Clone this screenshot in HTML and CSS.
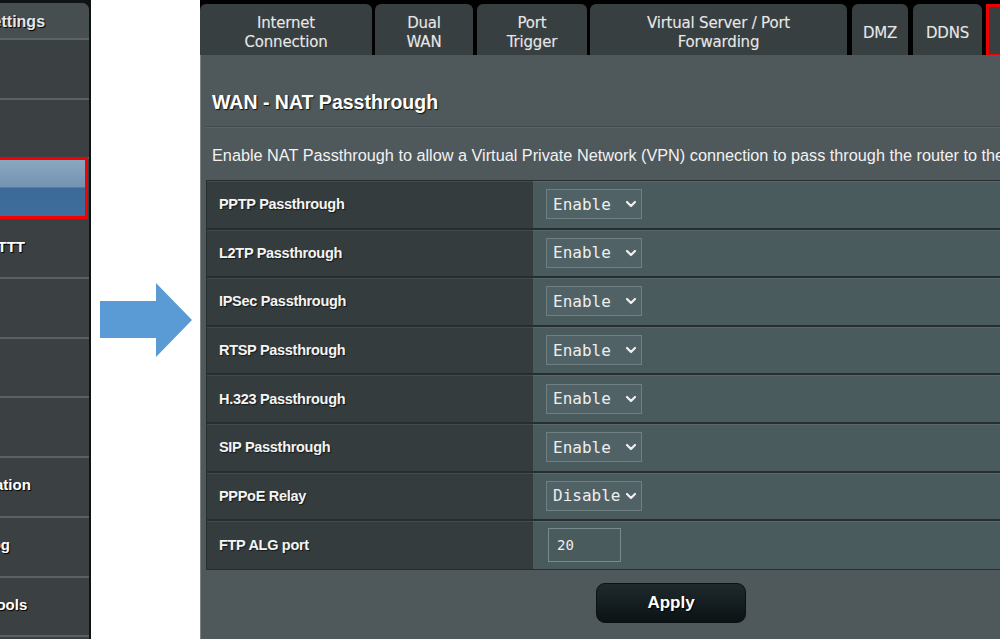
FILE: index.html
```html
<!DOCTYPE html>
<html lang="en">
<head>
<meta charset="utf-8">
<title>WAN - NAT Passthrough</title>
<link rel="stylesheet" href="styles.css">
</head>
<body>
<div class="page">
  <nav class="sidebar">
    <div class="side-panel">
      <div class="side-head"><span class="side-head-text">Advanced Settings</span></div>
      <div class="side-item"><span class="side-label">Wireless</span></div>
      <div class="side-item"><span class="side-label">LAN</span></div>
      <div class="side-item is-active"><span class="side-label">WAN</span></div>
      <div class="side-item"><span class="side-label">Alexa &amp; IFTTT</span></div>
      <div class="side-item"><span class="side-label">IPv6</span></div>
      <div class="side-item"><span class="side-label">VPN</span></div>
      <div class="side-item"><span class="side-label">Firewall</span></div>
      <div class="side-item"><span class="side-label">Administration</span></div>
      <div class="side-item"><span class="side-label">System Log</span></div>
      <div class="side-item"><span class="side-label">Network Tools</span></div>
    </div>
  </nav>

  <div class="gutter">
    <svg class="arrow" viewBox="0 0 92 74" aria-hidden="true">
      <polygon points="0,18 56,18 56,0 92,37 56,74 56,55 0,55" fill="#5b9bd5"/>
    </svg>
  </div>

  <main class="main">
    <div class="tabs">
      <div class="tab tab-inet">Internet<br>Connection</div>
      <div class="tab tab-dual">Dual<br>WAN</div>
      <div class="tab tab-trig">Port<br>Trigger</div>
      <div class="tab tab-vs">Virtual Server / Port<br>Forwarding</div>
      <div class="tab tab-dmz">DMZ</div>
      <div class="tab tab-ddns">DDNS</div>
      <div class="tab tab-nat">NAT<br>Passthrough</div>
    </div>

    <div class="content">
      <h1 class="title">WAN - NAT Passthrough</h1>
      <p class="desc">Enable NAT Passthrough to allow a Virtual Private Network (VPN) connection to pass through the router to the network clients.</p>

      <div class="table">
        <div class="row">
          <div class="cell-label">PPTP Passthrough</div>
          <div class="cell-value"><div class="select"><span>Enable</span><svg class="chev" viewBox="0 0 10 6"><polyline points="1,1 5,5 9,1"/></svg></div></div>
        </div>
        <div class="row">
          <div class="cell-label">L2TP Passthrough</div>
          <div class="cell-value"><div class="select"><span>Enable</span><svg class="chev" viewBox="0 0 10 6"><polyline points="1,1 5,5 9,1"/></svg></div></div>
        </div>
        <div class="row">
          <div class="cell-label">IPSec Passthrough</div>
          <div class="cell-value"><div class="select"><span>Enable</span><svg class="chev" viewBox="0 0 10 6"><polyline points="1,1 5,5 9,1"/></svg></div></div>
        </div>
        <div class="row">
          <div class="cell-label">RTSP Passthrough</div>
          <div class="cell-value"><div class="select"><span>Enable</span><svg class="chev" viewBox="0 0 10 6"><polyline points="1,1 5,5 9,1"/></svg></div></div>
        </div>
        <div class="row">
          <div class="cell-label">H.323 Passthrough</div>
          <div class="cell-value"><div class="select"><span>Enable</span><svg class="chev" viewBox="0 0 10 6"><polyline points="1,1 5,5 9,1"/></svg></div></div>
        </div>
        <div class="row">
          <div class="cell-label">SIP Passthrough</div>
          <div class="cell-value"><div class="select"><span>Enable</span><svg class="chev" viewBox="0 0 10 6"><polyline points="1,1 5,5 9,1"/></svg></div></div>
        </div>
        <div class="row">
          <div class="cell-label">PPPoE Relay</div>
          <div class="cell-value"><div class="select"><span>Disable</span><svg class="chev" viewBox="0 0 10 6"><polyline points="1,1 5,5 9,1"/></svg></div></div>
        </div>
        <div class="row">
          <div class="cell-label">FTP ALG port</div>
          <div class="cell-value"><div class="field">20</div></div>
        </div>
      </div>

      <div class="actions"><button class="apply" type="button">Apply</button></div>
    </div>
  </main>
</div>
</body>
</html>
```

FILE: styles.css
```css
html, body {
  margin: 0;
  padding: 0;
  background: #ffffff;
  overflow: hidden;
}

.page {
  display: flex;
  width: 1000px;
  height: 639px;
  overflow: hidden;
}

/* ---------- sidebar ---------- */
.sidebar {
  flex: 0 0 91px;
  box-sizing: border-box;
  padding: 3px 2px 0 0;
  background: #101314;
  overflow: hidden;
}

.side-panel {
  height: 100%;
  background: #3b4143;
  border-top-right-radius: 7px;
  overflow: hidden;
}

.side-head {
  box-sizing: border-box;
  height: 37px;
  padding-top: 2px;
  border-bottom: 2px solid #5b6365;
  background: #474e50;
  display: flex;
  align-items: center;
}

.side-head-text {
  margin-left: -99px;
  white-space: nowrap;
  font: bold 16px "Liberation Sans", Arial, sans-serif;
  color: #e6e6e6;
  text-shadow: 1px 1px 1px #000;
}

.side-item {
  box-sizing: border-box;
  height: 59.7px;
  border-bottom: 2px solid #596163;
  display: flex;
  align-items: center;
  padding-bottom: 4px;
}

.side-item.is-active {
  height: 62px;
  margin-top: -2px;
  margin-left: -10px;
  margin-right: 1px;
  padding-bottom: 0;
  border: 3px solid #f50000;
  background: linear-gradient(#8ba7c0 0%, #7393b1 48%, #3b6998 50%, #3f6d9b 100%);
}

.side-item.is-active .side-label {
  margin-left: -65px;
}

.side-label {
  margin-left: -75px;
  white-space: nowrap;
  font: bold 15px "Liberation Sans", Arial, sans-serif;
  color: #ffffff;
  text-shadow: 1px 1px 1px #000;
}

/* ---------- arrow gutter ---------- */
.gutter {
  flex: 0 0 109px;
  display: flex;
  align-items: center;
  justify-content: center;
}

.arrow {
  width: 92px;
  height: 74px;
  display: block;
}

/* ---------- main ---------- */
.main {
  flex: 0 0 941px;
  display: flex;
  flex-direction: column;
  background: #000;
}

.tabs {
  display: flex;
  height: 55px;
  box-sizing: border-box;
  padding-top: 4px;
  background: #000;
}

.tab {
  flex: none;
  box-sizing: border-box;
  height: 51px;
  padding-top: 7px;
  background: #383f41;
  border-radius: 6px 6px 0 0;
  display: flex;
  align-items: center;
  justify-content: center;
  text-align: center;
  font: 15px/19px "DejaVu Sans", Verdana, sans-serif;
  color: #e6e6e6;
  letter-spacing: -0.2px;
  text-shadow: 0 0 1px rgba(255,255,255,0.25);
}

.tab-inet { width: 172px; }
.tab-dual { width: 98px; margin-left: 3px; }
.tab-trig { width: 110px; margin-left: 4px; }
.tab-vs   { width: 257px; margin-left: 3px; }
.tab-dmz  { width: 56px; margin-left: 5px; }
.tab-ddns { width: 69px; margin-left: 5px; }
.tab-nat  {
  width: 150px;
  margin-left: 4px;
  height: 53px;
  border: 3px solid #f00000;
  border-radius: 0;
  color: transparent;
  text-shadow: none;
}

.content {
  flex: 1;
  background: #4f585b;
  border-left: 1px solid #7b8385;
  padding: 0 5px;
}

.title {
  margin: 0;
  padding: 35px 0 12px 6px;
  font: bold 19.5px/24px "Liberation Sans", Arial, sans-serif;
  color: #ffffff;
  text-shadow: 1px 1px 1px #111;
  border-bottom: 1px solid #41494c;
  box-shadow: 0 1px 0 #5a6366;
}

.desc {
  margin: 18px 0 15px;
  padding-left: 6px;
  font: 16.25px/20px "Liberation Sans", Arial, sans-serif;
  color: #f2f2f2;
  white-space: nowrap;
  overflow: hidden;
}

/* ---------- table ---------- */
.table {
  border: 1px solid #272d2f;
  background: #272d2f;
}

.row {
  display: flex;
  height: 48.6px;
  box-sizing: border-box;
  border-bottom: 2px solid #272e30;
}

.row:last-child {
  border-bottom: 0;
  height: 47.6px;
}

.cell-label {
  flex: 0 0 326px;
  box-sizing: border-box;
  padding-left: 12px;
  display: flex;
  align-items: center;
  background: #353c3e;
  box-shadow: inset 0 1px 0 #434b4d;
  font: bold 14.5px "Liberation Sans", Arial, sans-serif;
  letter-spacing: -0.3px;
  color: #f4f4f4;
  text-shadow: 1px 1px 1px #151a1b;
}

.cell-value {
  flex: 1;
  display: flex;
  align-items: center;
  padding-left: 13px;
  background: #4a5b5e;
  box-shadow: inset 0 1px 0 #56676a;
}

.select {
  width: 96px;
  height: 30px;
  box-sizing: border-box;
  border: 1px solid #6f7f82;
  background: #506266;
  display: flex;
  align-items: center;
  justify-content: space-between;
  padding: 0 5px 0 6px;
  font: 16px "DejaVu Sans Mono", monospace;
  color: #eeeeee;
}

.chev {
  width: 10px;
  height: 6px;
  flex: none;
  overflow: visible;
}

.chev polyline {
  fill: none;
  stroke: #f0f0f0;
  stroke-width: 2.2;
  stroke-linecap: round;
  stroke-linejoin: round;
}

.field {
  width: 73px;
  height: 34px;
  box-sizing: border-box;
  margin-left: 2px;
  border: 1px solid #7a8b8e;
  background: #4a5b5e;
  padding-left: 8px;
  display: flex;
  align-items: center;
  font: 14px "DejaVu Sans Mono", monospace;
  color: #eeeeee;
}

/* ---------- apply ---------- */
.actions {
  display: flex;
  justify-content: center;
  padding-top: 13px;
}

.apply {
  width: 150px;
  height: 40px;
  border: 1px solid #0b1011;
  border-radius: 9px;
  background: linear-gradient(#1f2a2d, #0c1214);
  font: bold 17px "Liberation Sans", Arial, sans-serif;
  color: #ffffff;
  text-shadow: 1px 1px 1px #000;
  cursor: pointer;
}
```
